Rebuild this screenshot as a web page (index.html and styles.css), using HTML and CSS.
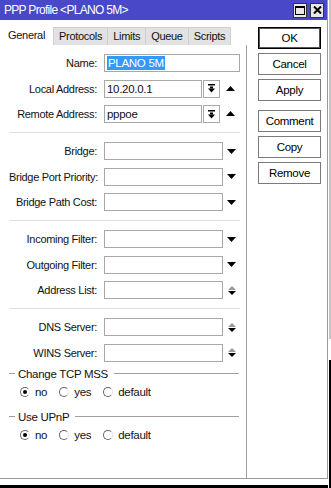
FILE: index.html
```html
<!DOCTYPE html>
<html lang="en">
<head>
  <meta charset="UTF-8">
  <title>PPP Profile</title>
  <link rel="stylesheet" href="styles.css">
</head>
<body>
  <div class="screen">
    <div class="main">
      <div class="win">
        <div class="titlebar">
          <span class="title">PPP Profile &lt;PLANO 5M&gt;</span>
          <div class="wbtns">
            <span class="wbtn"><svg width="10" height="9" viewBox="0 0 10 9"><rect x="0.5" y="0.5" width="9" height="8" fill="none" stroke="#000"/><rect x="0" y="0" width="10" height="2" fill="#000"/></svg></span>
            <span class="wbtn"><svg width="9" height="8" viewBox="0 0 9 8"><path d="M1 0.5 L8 7.5 M8 0.5 L1 7.5" stroke="#000" stroke-width="2"/></svg></span>
          </div>
        </div>
        <div class="body">
          <div class="panel">
            <div class="tabs">
              <span class="tab active">General</span>
              <span class="tab">Protocols</span>
              <span class="tab">Limits</span>
              <span class="tab">Queue</span>
              <span class="tab">Scripts</span>
            </div>
            <div class="pane">
              <div class="sec first">
                <div class="row">
                  <label class="lbl">Name:</label>
                  <div class="field"><span class="sel">PLANO 5M</span></div>
                </div>
                <div class="row">
                  <label class="lbl">Local Address:</label>
                  <div class="field">10.20.0.1</div>
                  <span class="box"><svg width="9" height="9" viewBox="0 0 9 9"><rect x="1" y="0" width="7" height="1.5"/><rect x="3" y="2.5" width="3" height="2"/><polygon points="1,4.5 8,4.5 4.5,8.5"/></svg></span>
                  <span class="arr wide"><svg width="9" height="5" viewBox="0 0 9 5"><polygon points="0,5 9,5 4.5,0"/></svg></span>
                </div>
                <div class="row">
                  <label class="lbl">Remote Address:</label>
                  <div class="field">pppoe</div>
                  <span class="box"><svg width="9" height="9" viewBox="0 0 9 9"><rect x="1" y="0" width="7" height="1.5"/><rect x="3" y="2.5" width="3" height="2"/><polygon points="1,4.5 8,4.5 4.5,8.5"/></svg></span>
                  <span class="arr wide"><svg width="9" height="5" viewBox="0 0 9 5"><polygon points="0,5 9,5 4.5,0"/></svg></span>
                </div>
              </div>

              <div class="sec">
                <div class="row">
                  <label class="lbl">Bridge:</label>
                  <div class="field"></div>
                  <span class="arr"><svg width="9" height="5" viewBox="0 0 9 5"><polygon points="0,0 9,0 4.5,5"/></svg></span>
                </div>
                <div class="row">
                  <label class="lbl">Bridge Port Priority:</label>
                  <div class="field"></div>
                  <span class="arr"><svg width="9" height="5" viewBox="0 0 9 5"><polygon points="0,0 9,0 4.5,5"/></svg></span>
                </div>
                <div class="row">
                  <label class="lbl">Bridge Path Cost:</label>
                  <div class="field"></div>
                  <span class="arr"><svg width="9" height="5" viewBox="0 0 9 5"><polygon points="0,0 9,0 4.5,5"/></svg></span>
                </div>
              </div>

              <div class="sec">
                <div class="row">
                  <label class="lbl">Incoming Filter:</label>
                  <div class="field"></div>
                  <span class="arr"><svg width="9" height="5" viewBox="0 0 9 5"><polygon points="0,0 9,0 4.5,5"/></svg></span>
                </div>
                <div class="row">
                  <label class="lbl">Outgoing Filter:</label>
                  <div class="field"></div>
                  <span class="arr"><svg width="9" height="5" viewBox="0 0 9 5"><polygon points="0,0 9,0 4.5,5"/></svg></span>
                </div>
                <div class="row">
                  <label class="lbl">Address List:</label>
                  <div class="field"></div>
                  <span class="arr"><svg width="8" height="9" viewBox="0 0 8 9"><polygon points="0,4 8,4 4,0" fill="#9a9a9a"/><polygon points="0,5 8,5 4,9"/></svg></span>
                </div>
              </div>

              <div class="sec last">
                <div class="row">
                  <label class="lbl">DNS Server:</label>
                  <div class="field"></div>
                  <span class="arr"><svg width="8" height="9" viewBox="0 0 8 9"><polygon points="0,4 8,4 4,0" fill="#9a9a9a"/><polygon points="0,5 8,5 4,9"/></svg></span>
                </div>
                <div class="row">
                  <label class="lbl">WINS Server:</label>
                  <div class="field"></div>
                  <span class="arr"><svg width="8" height="9" viewBox="0 0 8 9"><polygon points="0,4 8,4 4,0" fill="#9a9a9a"/><polygon points="0,5 8,5 4,9"/></svg></span>
                </div>
              </div>

              <div class="grp">
                <div class="legend">Change TCP MSS</div>
                <div class="opts">
                  <span class="opt"><span class="radio on"></span>no</span>
                  <span class="opt"><span class="radio"></span>yes</span>
                  <span class="opt"><span class="radio"></span>default</span>
                </div>
              </div>
              <div class="grp">
                <div class="legend">Use UPnP</div>
                <div class="opts">
                  <span class="opt"><span class="radio on"></span>no</span>
                  <span class="opt"><span class="radio"></span>yes</span>
                  <span class="opt"><span class="radio"></span>default</span>
                </div>
              </div>
            </div>
          </div>
          <div class="side">
            <button class="btn default">OK</button>
            <button class="btn">Cancel</button>
            <button class="btn">Apply</button>
            <button class="btn spaced">Comment</button>
            <button class="btn">Copy</button>
            <button class="btn">Remove</button>
          </div>
        </div>
      </div>
      <div class="shelf"></div>
    </div>
    <div class="edge"></div>
  </div>
</body>
</html>
```
FILE: styles.css
```css
body {
  margin: 0;
  background: #fff;
  font-family: "Liberation Sans", Arial, sans-serif;
  font-size: 11px;
  letter-spacing: -0.3px;
  color: #111;
}
.screen {
  display: flex;
  width: 331px;
  height: 488px;
  overflow: hidden;
}
.main {
  display: flex;
  flex-direction: column;
  width: 328px;
}
.win {
  height: 478px;
  border-right: 1px solid #9a9a9a;
  border-bottom: 1px solid #9a9a9a;
  display: flex;
  flex-direction: column;
  background: #fff;
}
.shelf {
  margin-top: 6px;
  height: 3px;
  background: #000;
}
.edge {
  width: 2px;
  margin-left: 1px;
  background: linear-gradient(to bottom, #c4c4c4 0 339px, #fff 339px 360px, #000 360px);
}

/* title bar */
.titlebar {
  height: 20px;
  background: #4848c8;
  color: #fff;
  display: flex;
  align-items: center;
  justify-content: space-between;
  padding: 0 3px 0 4px;
}
.title {
  font-size: 12px;
  letter-spacing: -0.7px;
}
.wbtns {
  display: flex;
  gap: 3px;
}
.wbtn {
  width: 12px;
  height: 13px;
  background: #e8e8e8;
  border: 1px solid #333;
  display: flex;
  align-items: center;
  justify-content: center;
}

/* body */
.body {
  flex: 1;
  display: flex;
}
.panel {
  width: 247px;
  display: flex;
  flex-direction: column;
}
.tabs {
  display: flex;
  align-items: flex-end;
  height: 25px;
  padding-left: 3px;
}
.tab {
  height: 17px;
  line-height: 17px;
  padding: 0 5px;
  background: #e2e2e2;
  border: 1px solid #cfcfcf;
  border-bottom: none;
  margin-left: -1px;
}
.tab.active {
  background: #fff;
  border-color: #fff;
  height: 19px;
  line-height: 19px;
  padding: 0 8px 0 4px;
  margin-left: 0;
}
.pane {
  flex: 1;
  border-right: 1px solid #a0a0a0;
  padding: 9px 6px 0 9px;
}
.sec {
  display: flex;
  flex-direction: column;
  gap: 7.5px;
  padding: 9px 0;
  border-top: 1px solid #dedede;
}
.sec.first {
  padding-top: 0;
  border-top: none;
}
.sec.last {
  padding-bottom: 0;
}
.row {
  display: flex;
  align-items: center;
  height: 18px;
}
.lbl {
  width: 88px;
  margin-right: 7px;
  text-align: right;
  white-space: nowrap;
}
.field {
  flex: 1;
  height: 16px;
  line-height: 16px;
  border: 1px solid #a8a8a8;
  padding-left: 2px;
  white-space: nowrap;
  font-size: 11.5px;
}
.sel {
  display: inline-block;
  background: #3399ff;
  color: #fff;
  line-height: 14px;
  padding: 0 1px;
}
.box {
  width: 15px;
  height: 16px;
  margin-left: 1px;
  border: 1px solid #a8a8a8;
  display: flex;
  align-items: center;
  justify-content: center;
}
.arr {
  width: 17px;
  display: flex;
  justify-content: center;
}
.arr.wide {
  width: 20px;
  padding-bottom: 1px;
}

/* radio groups */
.grp {
  margin-top: 6px;
}
.grp + .grp {
  margin-top: 12px;
}
.legend {
  display: flex;
  align-items: center;
  gap: 3px;
  height: 12px;
  margin-right: 1px;
  font-size: 11.5px;
}
.legend::before,
.legend::after {
  content: "";
  border-top: 1px solid #a0a0a0;
}
.legend::before {
  width: 6px;
}
.legend::after {
  flex: 1;
  margin-left: 3px;
}
.opts {
  display: flex;
  gap: 12px;
  height: 14px;
  align-items: center;
  margin-top: 5px;
  padding-left: 11px;
  font-size: 11.5px;
}
.opt {
  display: flex;
  align-items: center;
  gap: 5px;
}
.radio {
  width: 8px;
  height: 8px;
  border: 1px solid;
  border-color: #666 #e4e4e4 #666 #666;
  border-radius: 50%;
  display: flex;
  align-items: center;
  justify-content: center;
}
.radio.on::after {
  content: "";
  width: 4px;
  height: 4px;
  border-radius: 50%;
  background: #000;
}

/* buttons */
.side {
  display: flex;
  flex-direction: column;
  gap: 4px;
  padding: 7px 0 0 11px;
}
.btn {
  width: 63px;
  height: 22px;
  background: #fff;
  border: 1px solid #7a7a7a;
  font-family: inherit;
  font-size: 11.5px;
  letter-spacing: -0.3px;
  color: #000;
  padding: 0;
}
.btn.default {
  border-color: #000;
  box-shadow: inset 0 0 0 1px #555;
}
.btn.spaced {
  margin-top: 5px;
}
```
